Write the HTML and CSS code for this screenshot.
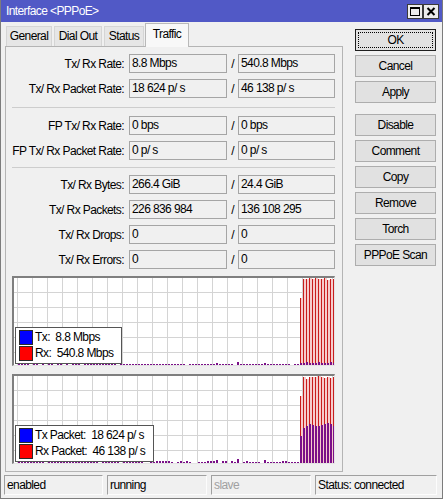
FILE: index.html
```html
<!DOCTYPE html>
<html lang="en">
<head>
    <meta charset="UTF-8">
    <meta name="viewport" content="width=device-width, initial-scale=1.0">
    <title>Interface &lt;PPPoE&gt;</title>
    <link rel="stylesheet" href="styles.css">
</head>
<body>
    <div class="window">
        <div class="titlebar">
            <span class="title">Interface &lt;PPPoE&gt;</span>
            <div class="title-buttons">
                <span class="tbtn">
                    <svg width="14" height="13" viewBox="0 0 14 13">
                        <rect x="2.5" y="2.5" width="9" height="8" fill="none" stroke="#000"/>
                        <line x1="2" y1="3.5" x2="12" y2="3.5" stroke="#000"/>
                    </svg>
                </span>
                <span class="tbtn">
                    <svg width="14" height="13" viewBox="0 0 14 13">
                        <path d="M3.5 3 L10.5 10 M10.5 3 L3.5 10" stroke="#000" stroke-width="2"/>
                    </svg>
                </span>
            </div>
        </div>

        <div class="main">
            <div class="left">
                <div class="tabs">
                    <div class="tab tab-general">General</div>
                    <div class="tab tab-dialout">Dial Out</div>
                    <div class="tab tab-status">Status</div>
                    <div class="tab tab-traffic active">Traffic</div>
                </div>

                <div class="panel">
                    <div class="row">
                        <label>Tx/ Rx Rate:</label>
                        <div class="field">8.8 Mbps</div>
                        <span class="slash">/</span>
                        <div class="field">540.8 Mbps</div>
                    </div>
                    <div class="row">
                        <label>Tx/ Rx Packet Rate:</label>
                        <div class="field">18 624 p/ s</div>
                        <span class="slash">/</span>
                        <div class="field">46 138 p/ s</div>
                    </div>

                    <div class="sep"></div>

                    <div class="row">
                        <label>FP Tx/ Rx Rate:</label>
                        <div class="field">0 bps</div>
                        <span class="slash">/</span>
                        <div class="field">0 bps</div>
                    </div>
                    <div class="row">
                        <label>FP Tx/ Rx Packet Rate:</label>
                        <div class="field">0 p/ s</div>
                        <span class="slash">/</span>
                        <div class="field">0 p/ s</div>
                    </div>

                    <div class="sep sep-tight"></div>

                    <div class="row">
                        <label>Tx/ Rx Bytes:</label>
                        <div class="field">266.4 GiB</div>
                        <span class="slash">/</span>
                        <div class="field">24.4 GiB</div>
                    </div>
                    <div class="row">
                        <label>Tx/ Rx Packets:</label>
                        <div class="field">226 836 984</div>
                        <span class="slash">/</span>
                        <div class="field">136 108 295</div>
                    </div>
                    <div class="row">
                        <label>Tx/ Rx Drops:</label>
                        <div class="field">0</div>
                        <span class="slash">/</span>
                        <div class="field">0</div>
                    </div>
                    <div class="row">
                        <label>Tx/ Rx Errors:</label>
                        <div class="field">0</div>
                        <span class="slash">/</span>
                        <div class="field">0</div>
                    </div>

                    <div class="graph">
                        <svg class="plot" id="rateGraph" width="320" height="87"></svg>
                        <div class="legend">
                            <div class="legend-row"><span class="swatch tx"></span><span class="legend-text">Tx:  8.8 Mbps</span></div>
                            <div class="legend-row"><span class="swatch rx"></span><span class="legend-text">Rx:  540.8 Mbps</span></div>
                        </div>
                    </div>

                    <div class="graph graph-second">
                        <svg class="plot" id="packetGraph" width="320" height="87"></svg>
                        <div class="legend">
                            <div class="legend-row"><span class="swatch tx"></span><span class="legend-text">Tx Packet:  18 624 p/ s</span></div>
                            <div class="legend-row"><span class="swatch rx"></span><span class="legend-text">Rx Packet:  46 138 p/ s</span></div>
                        </div>
                    </div>
                </div>
            </div>

            <div class="buttons">
                <button class="btn default">OK</button>
                <button class="btn">Cancel</button>
                <button class="btn">Apply</button>
                <button class="btn spaced">Disable</button>
                <button class="btn">Comment</button>
                <button class="btn">Copy</button>
                <button class="btn">Remove</button>
                <button class="btn">Torch</button>
                <button class="btn">PPPoE Scan</button>
            </div>
        </div>

        <div class="statusbar">
            <div class="cell cell-enabled">enabled</div>
            <div class="cell cell-running">running</div>
            <div class="cell cell-slave muted">slave</div>
            <div class="cell cell-status">Status: connected</div>
        </div>
    </div>

    <script>
        const PLOT_H = 87;

        function addRect(svg, x, y, w, h, color) {
            const r = document.createElementNS('http://www.w3.org/2000/svg', 'rect');
            r.setAttribute('x', x);
            r.setAttribute('y', y);
            r.setAttribute('width', w);
            r.setAttribute('height', h);
            r.setAttribute('fill', color);
            svg.appendChild(r);
        }

        // small repeatable noise for the idle part of the history
        function noise(seed) {
            let s = seed;
            return function () {
                s = (s * 1103515245 + 12345) % 2147483648;
                return s / 2147483648;
            };
        }

        function idleSeries(count, maxH, seed) {
            const rand = noise(seed);
            const values = [];
            for (let i = 0; i < count; i++) {
                values.push(rand() < 0.12 ? 0 : 1 + Math.floor(rand() * maxH));
            }
            return values;
        }

        // one sample every 3px, newest at the right edge
        function drawGraph(svg, rx, tx) {
            const count = rx.length;
            for (let i = 0; i < count; i++) {
                const x = 319 - 3 * (count - 1 - i);
                if (rx[i] > tx[i]) {
                    addRect(svg, x + 1, PLOT_H - rx[i], 2, rx[i], '#f6cccc');
                    addRect(svg, x, PLOT_H - rx[i], 1, rx[i], '#c81c1c');
                }
                if (tx[i] > 0) {
                    addRect(svg, x, PLOT_H - tx[i], 2, tx[i], '#7a1088');
                }
            }
        }

        const IDLE = 94;

        // Tx/Rx rate
        const rateIdle = idleSeries(IDLE, 1, 7);
        rateIdle[66] = 2; rateIdle[73] = 3; rateIdle[82] = 2;
        const rateRx = rateIdle.concat([67, 86, 86, 87, 86, 87, 86, 86, 87, 85, 86, 86]);
        const rateTx = rateIdle.concat([2, 2, 3, 2, 2, 2, 3, 2, 2, 2, 3, 2]);
        drawGraph(document.getElementById('rateGraph'), rateRx, rateTx);

        // Tx/Rx packets
        const pktIdle = idleSeries(IDLE, 2, 19);
        pktIdle[66] = 3; pktIdle[73] = 4; pktIdle[82] = 3;
        const pktRx = pktIdle.concat([67, 86, 84, 86, 86, 86, 87, 86, 85, 86, 85, 86]);
        const pktTx = pktIdle.concat([27, 35, 37, 39, 38, 37, 37, 38, 39, 40, 39, 37]);
        drawGraph(document.getElementById('packetGraph'), pktRx, pktTx);
    </script>
</body>
</html>
```

FILE: styles.css
```css
* {
    box-sizing: border-box;
}
body {
    margin: 0;
    background-color: #f0f0f0;
    font-family: "Liberation Sans", Arial, sans-serif;
    font-size: 12px;
    letter-spacing: -0.6px;
    color: #000;
}
.window {
    width: 443px;
    height: 499px;
    border: 1px solid #7c7c7c;
    border-top: none;
    display: flex;
    flex-direction: column;
}

/* title bar */
.titlebar {
    height: 22px;
    background-color: #5159c6;
    color: #fff;
    display: flex;
    align-items: center;
    justify-content: space-between;
    padding: 0 3px 0 5px;
}
.title-buttons {
    display: flex;
}
.tbtn {
    width: 16px;
    height: 15px;
    border: 1px solid #3a3a3a;
    background-color: #ececec;
    display: flex;
    align-items: center;
    justify-content: center;
}
.tbtn svg {
    display: block;
}

.main {
    display: flex;
    gap: 12px;
    padding: 1px 5px 0 4px;
}
.left {
    width: 338px;
}

/* tabs */
.tabs {
    height: 24px;
    display: flex;
    align-items: flex-end;
    gap: 2px;
    padding-left: 1px;
    margin-bottom: -1px;
    position: relative;
    z-index: 1;
}
.tab {
    height: 20px;
    margin-bottom: 1px;
    border: 1px solid #d5d5d5;
    border-bottom: none;
    background-color: #e6e6e6;
    text-align: center;
    line-height: 19px;
}
.tab-general { width: 46px; }
.tab-dialout { width: 48px; }
.tab-status { width: 40px; }
.tab-traffic { width: 44px; margin-left: -1px; }
.tab.active {
    height: 24px;
    margin-bottom: 0;
    border-color: #b9b9b9;
    background-color: #f8f8f8;
    line-height: 20px;
}

/* tab page */
.panel {
    height: 426px;
    border: 1px solid #b4b4b4;
    padding: 7px 7px 7px 6px;
}
.row {
    display: flex;
    align-items: center;
    height: 19px;
}
.row + .row {
    margin-top: 6px;
}
.row label {
    flex: none;
    width: 112px;
    margin-right: 5px;
    display: flex;
    justify-content: flex-end;
    white-space: nowrap;
}
.field {
    width: 98px;
    height: 19px;
    border: 1px solid #a5a5a5;
    background-color: #f0f0f0;
    padding-left: 2px;
    line-height: 17px;
    white-space: nowrap;
}
.slash {
    width: 11px;
    text-align: center;
}
.row .field:last-child {
    width: 97px;
}
.sep {
    border-top: 1px solid #cdcdcd;
    margin: 9px 0 8px;
}
.sep-tight {
    margin: 7px 0 7px;
}

/* graphs */
.graph {
    position: relative;
    height: 90px;
    margin-top: 7px;
    border-style: solid;
    border-width: 2px 1px 1px 2px;
    border-color: #7f7f7f #e4e4e4 #e4e4e4 #7f7f7f;
    background-color: #fff;
    background-image:
        linear-gradient(to right, #d4d4d4 1px, transparent 1px),
        linear-gradient(to bottom, #d4d4d4 1px, transparent 1px);
    background-size: 15px 15px;
    background-position: right 2px top 14px;
}
.graph-second {
    margin-top: 8px;
}
.plot {
    display: block;
}
.legend {
    position: absolute;
    left: 1px;
    bottom: 1px;
    background-color: #fff;
    border: 1px solid #555;
    padding: 1px 8px 2px 3px;
}
.legend-row {
    display: flex;
    align-items: center;
    gap: 2px;
    height: 16px;
}
.swatch {
    width: 14px;
    height: 15px;
    border: 1px solid #2a2a2a;
}
.swatch.tx {
    background-color: #0000ff;
}
.swatch.rx {
    background-color: #ff0000;
}
.legend-text {
    white-space: pre;
}

/* side buttons */
.buttons {
    width: 81px;
    display: flex;
    flex-direction: column;
    gap: 4px;
    padding-top: 6px;
}
.btn {
    height: 22px;
    padding: 0;
    border: 1px solid #adadad;
    background-color: #e1e1e1;
    font-family: inherit;
    font-size: 12px;
    letter-spacing: -0.6px;
    color: #000;
}
.btn.default {
    border-color: #1e1e1e;
    outline: 1px dotted #000;
    outline-offset: -4px;
}
.btn.spaced {
    margin-top: 7px;
}

/* status bar */
.statusbar {
    display: flex;
    gap: 4px;
    margin-top: 3px;
    padding: 0 4px 0 3px;
}
.cell {
    height: 20px;
    border: 1px solid;
    border-color: #a0a0a0 #fcfcfc #fcfcfc #a0a0a0;
    padding-left: 2px;
    line-height: 18px;
}
.cell-enabled { width: 99px; }
.cell-running { width: 100px; }
.cell-slave { width: 100px; }
.cell-status { width: 122px; }
.muted {
    color: #a0a0a0;
}
```
